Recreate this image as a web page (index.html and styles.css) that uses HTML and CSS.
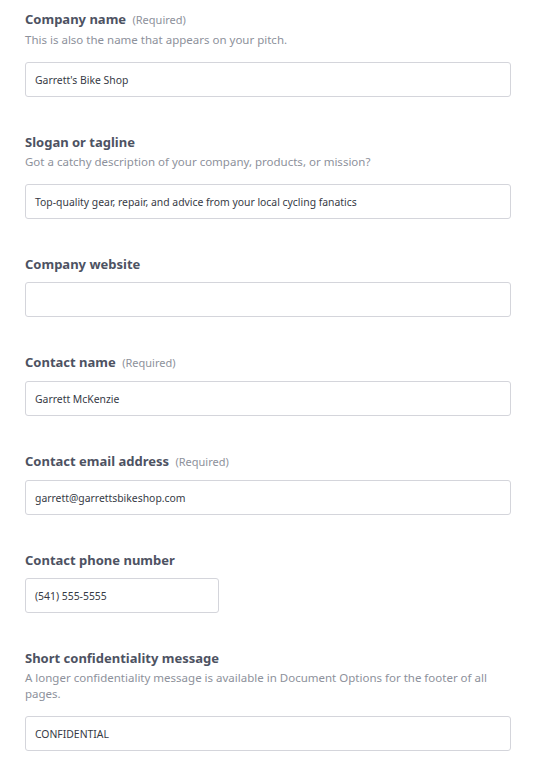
FILE: index.html
```html
<!DOCTYPE html>
<html>
<head>
<meta charset="utf-8">
<link rel="stylesheet" href="styles.css">
</head>
<body>
<form class="form">
  <div class="field">
    <div class="label">Company name <span class="req">(Required)</span></div>
    <div class="help">This is also the name that appears on your pitch.</div>
    <div class="input">Garrett's Bike Shop</div>
  </div>
  <div class="field">
    <div class="label">Slogan or tagline</div>
    <div class="help">Got a catchy description of your company, products, or mission?</div>
    <div class="input">Top-quality gear, repair, and advice from your local cycling fanatics</div>
  </div>
  <div class="field">
    <div class="label">Company website</div>
    <div class="input"></div>
  </div>
  <div class="field">
    <div class="label">Contact name <span class="req">(Required)</span></div>
    <div class="input">Garrett McKenzie</div>
  </div>
  <div class="field">
    <div class="label">Contact email address <span class="req">(Required)</span></div>
    <div class="input">garrett@garrettsbikeshop.com</div>
  </div>
  <div class="field">
    <div class="label">Contact phone number</div>
    <div class="input short">(541) 555-5555</div>
  </div>
  <div class="field">
    <div class="label">Short confidentiality message</div>
    <div class="help">A longer confidentiality message is available in Document Options for the footer of all pages.</div>
    <div class="input">CONFIDENTIAL</div>
  </div>
</form>
</body>
</html>
```

FILE: styles.css
```css
html, body {
  margin: 0;
  padding: 0;
  background: #ffffff;
}
body {
  font-family: "Noto Sans", sans-serif;
  padding: 11px 27px 0 25px;
}
.form {
  display: flex;
  flex-direction: column;
  gap: 37px;
}
.field {
  display: flex;
  flex-direction: column;
}
.label {
  font-size: 13px;
  line-height: 16px;
  font-weight: 700;
  color: #4d5262;
}
.req {
  font-size: 11px;
  font-weight: 400;
  color: #8d919b;
  margin-left: 3px;
}
.help {
  font-size: 11.5px;
  line-height: 16px;
  color: #8d919b;
  margin: 4px 0;
  padding-right: 20px;
}
.input {
  margin-top: 10px;
  height: 35px;
  box-sizing: border-box;
  border: 1px solid #d4d5db;
  border-radius: 3px;
  padding: 0 9px;
  display: flex;
  align-items: center;
  font-size: 10.4px;
  color: #363a45;
}
.input.short {
  width: 194px;
}
```
